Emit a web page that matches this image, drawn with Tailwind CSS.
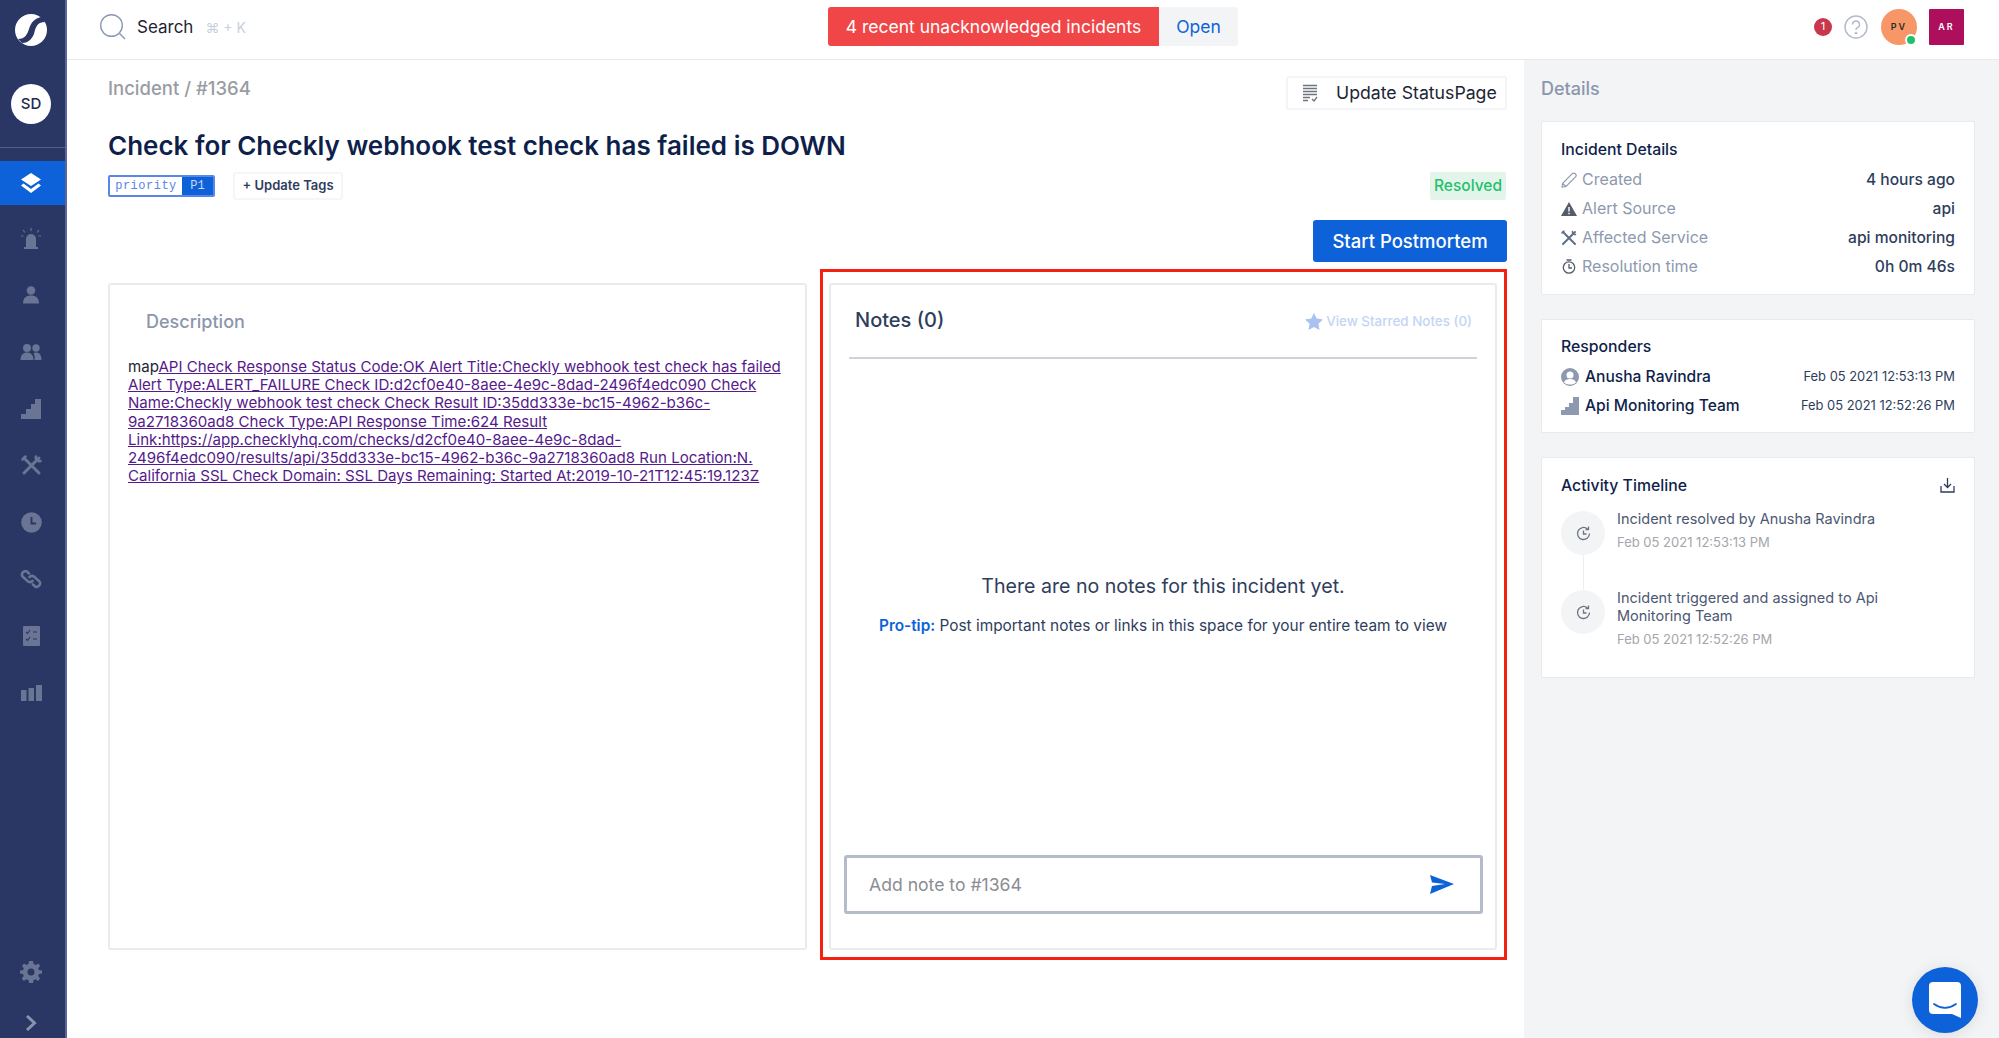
<!DOCTYPE html>
<html lang="en">
<head>
    <meta charset="UTF-8" />
    <title>Incident #1364</title>
    <script src="https://cdn.jsdelivr.net/npm/@tailwindcss/browser@4"></script>
</head>
<body class="font-['Inter',sans-serif] text-[#0f1f4b] bg-white">

<div class="relative flex w-[1999px] h-[1038px] overflow-hidden">

    <!-- sidebar -->
    <nav class="w-[67px] h-full shrink-0 bg-[#2a3663] border-r-2 border-[#5a6798] flex flex-col items-stretch text-[#6a7494]">
        <div class="h-[60px] pr-[3px] flex items-center justify-center">
            <svg width="32" height="32" viewBox="0 0 32 32"><circle cx="16" cy="16" r="16" fill="#fff"/><path d="M27 3C19 4 16 9 14 15C12.500 20 10 25 3 25L7 29C14 29 18 24 19.500 18C21 12 23 8 30 8Z" fill="#2a3663"/></svg>
        </div>
        <div class="h-[88px] pr-[3px] flex items-center justify-center border-b border-[#535e86]">
            <div class="w-10 h-10 rounded-full bg-white text-[#1c2a52] text-[15px] font-medium flex items-center justify-center mt-[1px]">SD</div>
        </div>
        <div class="mt-[13px] flex flex-col gap-[12.900px]">
            <div class="h-[44px] pr-[3px] -mb-[2px] bg-[#0d62d9] flex items-center justify-center">
                <svg width="22" height="22" viewBox="0 0 22 22" fill="#fff"><path d="M11 1L21 7.500L11 14L1 7.500Z"/><path d="M3.500 11.500L1 13.500L11 21L21 13.500L18.500 11.500L11 17Z"/></svg>
            </div>
            <div class="h-[44px] pr-[3px] flex items-center justify-center">
                <svg width="22" height="22" viewBox="0 0 22 22" fill="currentColor"><path d="M6 20V12A5 5 0 0 1 16 12V20ZM4 20H18V22H4Z"/><path d="M11 1V4M3 3L5 5.500M19 3L17 5.500M1 9H3.500M21 9H18.500" stroke="currentColor" stroke-width="1.200"/></svg>
            </div>
            <div class="h-[44px] pr-[3px] flex items-center justify-center">
                <svg width="18" height="18" viewBox="0 0 18 18" fill="currentColor"><circle cx="9" cy="4.500" r="4.300"/><path d="M1 17.500C1 12 4 9.500 9 9.500C14 9.500 17 12 17 17.500Z"/></svg>
            </div>
            <div class="h-[44px] pr-[3px] flex items-center justify-center">
                <svg width="22" height="18" viewBox="0 0 22 18" fill="currentColor"><circle cx="7" cy="5" r="4"/><circle cx="16" cy="5" r="3.700"/><path d="M0.500 17C0.500 12 3 9.500 7 9.500C11 9.500 13.500 12 13.500 17Z"/><path d="M14.500 17H21.500C21.500 12 19.500 9.500 16 9.500C15 9.500 14 9.700 13.500 10C14.500 12 15 14 14.500 17Z"/></svg>
            </div>
            <div class="h-[44px] pr-[3px] flex items-center justify-center">
                <svg width="20" height="20" viewBox="0 0 20 20" fill="currentColor"><path d="M0 20V15H5V10H10V5H14V0H20V20Z"/></svg>
            </div>
            <div class="h-[44px] pr-[3px] flex items-center justify-center">
                <svg width="21" height="21" viewBox="0 0 21 21" fill="none" stroke="currentColor" stroke-width="3" stroke-linecap="round"><path d="M3 18L18 3"/><path d="M3 3L18 18"/><path d="M1.500 4.500L4.500 1.500M15 1.500A3.500 3.500 0 0 0 19.500 6" stroke-width="2.500"/></svg>
            </div>
            <div class="h-[44px] pr-[3px] flex items-center justify-center">
                <svg width="21" height="21" viewBox="0 0 21 21"><circle cx="10.500" cy="10.500" r="10.300" fill="currentColor"/><path d="M10.500 5V11.500H15" fill="none" stroke="#2a3663" stroke-width="1.800"/></svg>
            </div>
            <div class="h-[44px] pr-[3px] flex items-center justify-center">
                <svg width="22" height="22" viewBox="0 0 22 22" fill="none" stroke="currentColor" stroke-width="2.600" stroke-linecap="round"><path d="M9 5.500L7 3.500A3.500 3.500 0 0 0 2.500 8.500L8 13.500A3.500 3.500 0 0 0 12.500 13"/><path d="M13 16.500L15 18.500A3.500 3.500 0 0 0 19.500 13.500L14 8.500A3.500 3.500 0 0 0 9.500 9"/></svg>
            </div>
            <div class="h-[44px] pr-[3px] flex items-center justify-center">
                <svg width="17" height="20" viewBox="0 0 17 20"><rect width="17" height="20" rx="1" fill="currentColor"/><path d="M3 6L4.500 7.500L7 4M3 13L4.500 14.500L7 11M10 6H14M10 13H14" fill="none" stroke="#2a3663" stroke-width="1.100"/></svg>
            </div>
            <div class="h-[44px] pr-[3px] flex items-center justify-center">
                <svg width="21" height="16" viewBox="0 0 21 16" fill="currentColor"><rect y="5" width="5.500" height="11"/><rect x="7.500" y="3" width="5.500" height="13"/><rect x="15" width="6" height="16"/></svg>
            </div>
        </div>
        <div class="mt-auto pr-[3px] flex flex-col items-center">
            <div class="h-[44px] flex items-center justify-center">
                <svg width="22" height="22" viewBox="0 0 22 22" fill="currentColor"><path fill-rule="evenodd" d="M9 0H13L13.600 3L16 4L18.600 2.400L20 5L18.200 7.500L19 9.300L22 9.500V12.500L19 13L18.200 15L20 17.500L18 20L15.500 18.300L13.600 19L13 22H9L8.400 19L6.300 18.200L3.800 20L1.800 17.500L3.700 15L3 13L0 12.500V9.500L3 9.200L3.800 7.300L2 5L4 2.400L6.400 4L8.400 3ZM11 7.500A3.500 3.500 0 1 0 11 14.500A3.500 3.500 0 1 0 11 7.500Z"/></svg>
            </div>
            <div class="h-[24px] mt-[20px] flex items-start justify-center">
                <svg width="12" height="18" viewBox="0 0 12 18" fill="none" stroke="#8a93ad" stroke-width="3"><path d="M2 2L9.500 9L2 16"/></svg>
            </div>
        </div>
    </nav>

    <div class="flex-1 min-w-0 flex flex-col">
        <!-- top bar -->
        <header class="h-[60px] shrink-0 border-b border-[#e8eaf0] pb-[6px] flex items-center">
            <div class="w-[761px] pl-[33px] flex items-center">
                <svg width="26" height="26" viewBox="0 0 26 26" fill="none" stroke="#8a9ab5" stroke-width="1.400"><circle cx="11.500" cy="11.500" r="10.800"/><path d="M19.500 19.500L25 25"/></svg>
                <span class="ml-[11px] pt-[2px] text-[17px] text-[#1d2433]">Search</span>
                <span class="ml-[12px] pt-[2px] text-[14px] text-[#c8d0dc]">⌘ + K</span>
            </div>
            <div class="flex h-[39px] rounded-[3px] overflow-hidden text-[17.500px]">
                <div class="w-[331px] pt-[1px] bg-[#f04648] text-white flex items-center justify-center">4 recent unacknowledged incidents</div>
                <div class="w-[79px] pt-[1px] bg-[#f3f4f6] text-[#0d62d9] flex items-center justify-center">Open</div>
            </div>
            <div class="flex-1 flex items-center justify-end pr-[35px]">
                <div class="w-[18px] h-[18px] rounded-full bg-[#c9374c] text-white text-[11px] flex items-center justify-center">1</div>
                <svg class="ml-[12px]" width="24" height="24" viewBox="0 0 24 24" fill="none" stroke="#b4bccb" stroke-width="1.500"><circle cx="12" cy="12" r="11"/><path d="M8.500 9.500A3.500 3.500 0 1 1 13 12.800C12.200 13.200 12 13.800 12 15"/><circle cx="12" cy="18" r="0.600"/></svg>
                <div class="ml-[13px] relative w-[36px] h-[36px] rounded-full bg-[#f79767] text-[#2a2a2a] text-[9px] font-semibold tracking-[2px] flex items-center justify-center">PV
                    <span class="absolute right-[1px] bottom-[0px] w-[8px] h-[8px] rounded-full bg-[#1fc16b] border-2 border-white box-content -mr-[1px] -mb-[1px]"></span>
                </div>
                <div class="ml-[12px] w-[35px] h-[36px] bg-[#ad0f5c] text-white text-[9px] font-semibold tracking-[2px] flex items-center justify-center rounded-[1px]">AR</div>
            </div>
        </header>

        <div class="flex-1 flex min-h-0">
            <!-- main column -->
            <main class="w-[1457px] shrink-0 pl-[41px] pr-[17px] pt-[16px]">
                <div class="flex justify-between items-start">
                    <div class="text-[18.500px] leading-[24px] font-medium text-[#999ca3]">Incident / #1364</div>
                    <div class="w-[221px] h-[34px] border-2 border-[#f3f4f6] rounded-[3px] flex items-center pl-[14px]">
                        <svg width="16" height="18" viewBox="0 0 16 18" fill="none" stroke="#6d7480" stroke-width="1.300"><path d="M1 1.500H15M1 4.500H15M1 7.500H15M1 10.500H15M1 13.500H8M1 16.500H6M10 15L12 17L15 13"/></svg>
                        <span class="ml-[18px] text-[17.700px] text-[#1d2433]">Update StatusPage</span>
                    </div>
                </div>
                <h1 class="mt-[21px] text-[26px] leading-[30px] font-semibold text-[#0f1f4b]">Check for Checkly webhook test check has failed is DOWN</h1>
                <div class="mt-[11px] h-[28px] flex items-center">
                    <div class="flex h-[22px] w-[107px] border-2 border-[#5b86e5] rounded-[2px] font-['Liberation_Mono',monospace] text-[12px]">
                        <span class="flex-1 text-[#5b86e5] flex items-center justify-center tracking-[0.500px]">priority</span>
                        <span class="w-[31px] bg-[#0d62d9] text-[#c7d9f7] flex items-center justify-center">P1</span>
                    </div>
                    <div class="ml-[18px] h-[28px] w-[110px] border-2 border-[#f5f6f8] rounded-[3px] text-[13px] font-semibold text-[#2f3d5c] flex items-center justify-center">+ Update Tags</div>
                    <div class="ml-auto mr-[1px] w-[76px] h-[28px] bg-[#e3f5ea] text-[#1fc16b] text-[15.500px] font-medium flex items-center justify-center rounded-[2px]">Resolved</div>
                </div>
                <div class="mt-[20px] flex justify-end">
                    <div class="w-[194px] h-[42px] pt-[1px] bg-[#0d62d9] text-white text-[18.500px] font-medium rounded-[3px] flex items-center justify-center">Start Postmortem</div>
                </div>
                <div class="mt-[7px] flex items-start gap-[13px]">
                    <!-- description -->
                    <section class="w-[699px] h-[667px] mt-[14px] border-2 border-[#e9ebef] rounded-[3px] pl-[18px] pt-[25px]">
                        <h2 class="pl-[18px] text-[18px] leading-[24px] font-medium text-[#8b96ab]">Description</h2>
                        <p class="mt-[24px] text-[15.100px] leading-[18.200px] text-[#1d2433] whitespace-nowrap">map<a class="underline text-[#551a8b]">API Check Response Status Code:OK Alert Title:Checkly webhook test check has failed<br>Alert Type:ALERT_FAILURE Check ID:d2cf0e40-8aee-4e9c-8dad-2496f4edc090 Check<br>Name:Checkly webhook test check Check Result ID:35dd333e-bc15-4962-b36c-<br>9a2718360ad8 Check Type:API Response Time:624 Result<br>Link:https://app.checklyhq.com/checks/d2cf0e40-8aee-4e9c-8dad-<br>2496f4edc090/results/api/35dd333e-bc15-4962-b36c-9a2718360ad8 Run Location:N.<br>California SSL Check Domain: SSL Days Remaining: Started At:2019-10-21T12:45:19.123Z</a></p>
                    </section>
                    <!-- notes -->
                    <div class="w-[687px] h-[691px] border-[3px] border-[#f5200f] pl-[6px] pt-[11px]">
                        <section class="w-[668px] h-[667px] border-2 border-[#e9ebef] rounded-[3px] flex flex-col">
                            <div class="h-[74px] mx-[18px] border-b-2 border-[#ced2da] flex items-start justify-between">
                                <h2 class="ml-[6px] mt-[22px] text-[20px] leading-[26px] font-medium text-[#2f3d5c]">Notes (0)</h2>
                                <div class="mt-[26px] mr-[5px] flex items-center text-[13.400px] font-medium text-[#c3d5f4]">
                                    <svg width="18" height="17" viewBox="0 0 18 17" fill="#a9c2ef"><path d="M9 0L11.700 5.600L18 6.500L13.400 10.800L14.500 17L9 14L3.500 17L4.600 10.800L0 6.500L6.300 5.600Z"/></svg>
                                    <span class="ml-[3px]">View Starred Notes (0)</span>
                                </div>
                            </div>
                            <div class="flex-1 flex flex-col items-center pt-[214px]">
                                <div class="text-[19.600px] leading-[26px] text-[#2f3d5c]">There are no notes for this incident yet.</div>
                                <div class="mt-[17px] text-[15.400px] leading-[20px] text-[#2f3d5c]"><b class="font-semibold text-[#0d62d9]">Pro-tip:</b> Post important notes or links in this space for your entire team to view</div>
                            </div>
                            <div class="ml-[13px] mb-[34px] w-[639px] h-[59px] border-[3px] border-[#b4bcca] rounded-[3px] flex items-center pl-[22px] pr-[26px]">
                                <input class="flex-1 pt-[1px] outline-none text-[17.600px] placeholder:text-[#8a8d93]" placeholder="Add note to #1364">
                                <svg width="24" height="19" viewBox="0 0 24 19" fill="#0d62d9"><path d="M0 0L24 9L0 19L2 11L15 9L2 7.500Z"/></svg>
                            </div>
                        </section>
                    </div>
                </div>
            </main>

            <!-- details column -->
            <aside class="flex-1 bg-[#f3f4f6] pl-[17px] pr-[24px] pt-[16px]">
                <h2 class="text-[18px] leading-[24px] font-medium text-[#8b96ab] mt-[1px]">Details</h2>

                <section class="mt-[20px] h-[174px] bg-white border border-[#e8eaee] rounded-[2px] px-[19px] pt-[17px]">
                    <h3 class="text-[15.800px] leading-[22px] font-medium text-[#0f1f4b]">Incident Details</h3>
                    <div class="mt-[4px] flex flex-col text-[16px] leading-[29px] text-[#2f3d5c]">
                        <div class="flex items-center h-[29px]">
                            <svg class="w-[16px]" width="16" height="16" viewBox="0 0 16 16" fill="none" stroke="#8d99ae" stroke-width="1.100"><path d="M1 15L1.500 11.500L11 2A2 2 0 0 1 14.500 5L5 14.500ZM1.500 11.500L5 14.500"/></svg>
                            <span class="ml-[5px] text-[#8d99ae]">Created</span><span class="ml-auto text-[15.600px] font-medium">4 hours ago</span>
                        </div>
                        <div class="flex items-center h-[29px]">
                            <svg class="w-[16px]" width="16" height="14" viewBox="0 0 16 14"><path d="M8 0L16 14H0Z" fill="#555d6b"/><path d="M8 5V9.500M8 10.800V12.200" stroke="#fff" stroke-width="1.400"/></svg>
                            <span class="ml-[5px] text-[#8d99ae]">Alert Source</span><span class="ml-auto text-[15.600px] font-medium">api</span>
                        </div>
                        <div class="flex items-center h-[29px]">
                            <svg class="w-[16px]" width="16" height="16" viewBox="0 0 16 16" fill="none" stroke="#5f6f89" stroke-width="2" stroke-linecap="round"><path d="M2 14L14 2M2 2L14 14"/><path d="M1 3L3 1M11.500 1.500A2.500 2.500 0 0 0 14.500 4.500" stroke-width="1.500"/></svg>
                            <span class="ml-[5px] text-[#8d99ae]">Affected Service</span><span class="ml-auto text-[15.600px] font-medium">api monitoring</span>
                        </div>
                        <div class="flex items-center h-[29px]">
                            <svg class="w-[16px]" width="14" height="15" viewBox="0 0 14 15" fill="none" stroke="#555d6b" stroke-width="1.300"><circle cx="7" cy="8.500" r="5.700"/><path d="M4.500 1H9.500M7 5V9H10"/></svg>
                            <span class="ml-[5px] text-[#8d99ae]">Resolution time</span><span class="ml-auto text-[15.600px] font-medium">0h 0m 46s</span>
                        </div>
                    </div>
                </section>

                <section class="mt-[24px] h-[114px] bg-white border border-[#e8eaee] rounded-[2px] px-[19px] pt-[16px]">
                    <h3 class="text-[15.800px] leading-[22px] font-medium text-[#0f1f4b]">Responders</h3>
                    <div class="mt-[4px] flex flex-col">
                        <div class="flex items-center h-[29px]">
                            <svg width="18" height="18" viewBox="0 0 18 18"><circle cx="9" cy="9" r="9" fill="#8d99ae"/><circle cx="9" cy="7" r="3.500" fill="#fff"/><path d="M3 14.500C4 11.500 6 11 9 11C12 11 14 11.500 15 14.500C13.500 16 11.500 16.500 9 16.500C6.500 16.500 4.500 16 3 14.500Z" fill="#fff"/></svg>
                            <span class="ml-[6px] text-[15.600px] font-medium text-[#0f1f4b]">Anusha Ravindra</span>
                            <span class="ml-auto text-[12.900px] text-[#2f3d5c]">Feb 05 2021 12:53:13 PM</span>
                        </div>
                        <div class="flex items-center h-[29px]">
                            <svg width="18" height="18" viewBox="0 0 18 18" fill="#8d99ae"><path d="M0 18V13H4V10H8V6H12V0H18V18Z"/></svg>
                            <span class="ml-[6px] text-[15.600px] font-medium text-[#0f1f4b]">Api Monitoring Team</span>
                            <span class="ml-auto text-[12.900px] text-[#2f3d5c]">Feb 05 2021 12:52:26 PM</span>
                        </div>
                    </div>
                </section>

                <section class="mt-[24px] h-[221px] bg-white border border-[#e8eaee] rounded-[2px] pl-[19px] pr-[19px] pt-[17px]">
                    <div class="flex items-center justify-between">
                        <h3 class="text-[15.800px] leading-[22px] font-medium text-[#0f1f4b]">Activity Timeline</h3>
                        <svg class="-mt-[1px]" width="15" height="15" viewBox="0 0 15 15" fill="none" stroke="#2f3d5c" stroke-width="1.300"><path d="M7.500 0V9M4 6L7.500 9.500L11 6M1 8V14H14V8"/></svg>
                    </div>
                    <div class="mt-[14px] flex">
                        <div class="w-[44px] shrink-0 flex flex-col items-center">
                            <div class="w-[44px] h-[44px] rounded-full bg-[#f3f4f6] flex items-center justify-center">
                                <svg width="15" height="15" viewBox="0 0 15 15" fill="none" stroke="#6d7480" stroke-width="1.300"><path d="M13.500 7.500A6 6 0 1 1 11.500 3M7.500 4.500V8H10.500M12.500 0.500V3.500H9.500"/></svg>
                            </div>
                            <div class="w-[1px] h-[35px] bg-[#edeef1]"></div>
                            <div class="w-[44px] h-[44px] rounded-full bg-[#f3f4f6] flex items-center justify-center">
                                <svg width="15" height="15" viewBox="0 0 15 15" fill="none" stroke="#6d7480" stroke-width="1.300"><path d="M13.500 7.500A6 6 0 1 1 11.500 3M7.500 4.500V8H10.500M12.500 0.500V3.500H9.500"/></svg>
                            </div>
                        </div>
                        <div class="ml-[12px] flex-1 text-[14.500px] leading-[18px] text-[#4c5872]">
                            <div class="-mt-[1px]">Incident resolved by Anusha Ravindra</div>
                            <div class="mt-[6px] text-[13px] leading-[17px] text-[#a3a6ac]">Feb 05 2021 12:53:13 PM</div>
                            <div class="mt-[38px]">Incident triggered and assigned to Api<br>Monitoring Team</div>
                            <div class="mt-[6px] text-[13px] leading-[17px] text-[#a3a6ac]">Feb 05 2021 12:52:26 PM</div>
                        </div>
                    </div>
                </section>
            </aside>
        </div>
    </div>

    <!-- chat launcher -->
    <div class="absolute left-[1912px] top-[967px] w-[66px] h-[66px] rounded-full bg-[#0d62d9] shadow-[0_2px_16px_rgba(0,0,0,0.1)] flex items-center justify-center">
        <svg width="32" height="36" viewBox="0 0 32 36"><path d="M4 0H28A4 4 0 0 1 32 4V36L23 32H4A4 4 0 0 1 0 28V4A4 4 0 0 1 4 0Z" fill="#fff"/><path d="M5 22C12 27 20 27 27 22" fill="none" stroke="#0d62d9" stroke-width="1.800" stroke-linecap="round"/></svg>
    </div>
</div>

</body>
</html>
